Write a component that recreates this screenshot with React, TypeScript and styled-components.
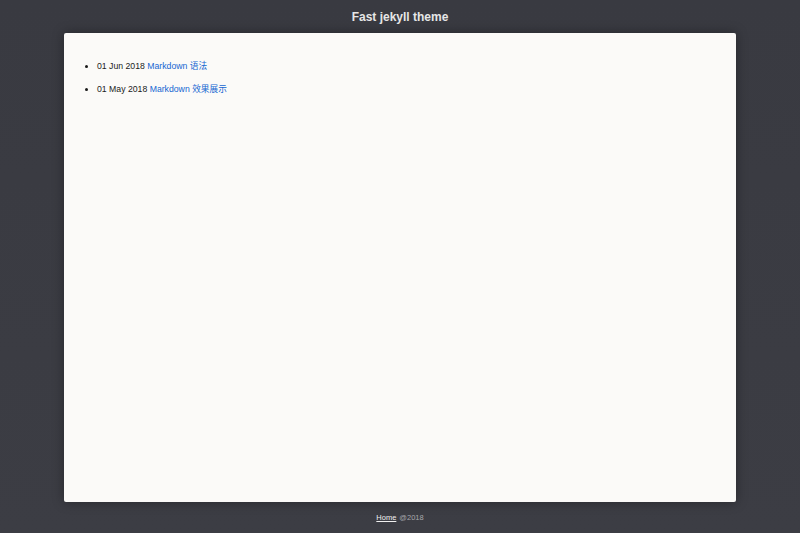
import React from "react";
import styled, { createGlobalStyle } from "styled-components";

const Global = createGlobalStyle`
  html, body { margin: 0; padding: 0; }
  body {
    background: #3b3c43;
    font-family: "Liberation Sans", Arial, "Noto Sans CJK SC", sans-serif;
    -webkit-font-smoothing: antialiased;
  }
`;

const Page = styled.div`
  display: flex;
  flex-direction: column;
  min-height: 533px;
  background: linear-gradient(180deg, #393a41 0%, #3c3d44 100%);
`;

const Header = styled.header`
  height: 33px;
  display: flex;
  align-items: center;
  justify-content: center;
`;

const Title = styled.h1`
  margin: 0;
  font-size: 12px;
  font-weight: bold;
  color: #e6e6e6;
  line-height: 1;
`;

const Card = styled.main`
  width: 672px;
  height: 469px;
  margin: 0 auto;
  box-sizing: border-box;
  background: #fbfaf8;
  border-radius: 2px;
  box-shadow: 0 0 12px rgba(0, 0, 0, 0.35);
  padding: 28px 0 0 33px;
`;

const PostList = styled.ul`
  margin: 0;
  padding: 0;
  list-style: disc;
`;

const PostItem = styled.li`
  font-size: 8.7px;
  line-height: 10px;
  color: #1a1a1a;
  margin-bottom: 13px;
`;

const PostLink = styled.a`
  color: #1566d2;
  text-decoration: none;
`;

const Footer = styled.footer`
  height: 31px;
  display: flex;
  align-items: center;
  justify-content: center;
  font-size: 7.5px;
  color: #a8a8ad;
  gap: 3px;
`;

const FooterLink = styled.a`
  color: #f0f0f0;
  text-decoration: underline;
`;

const posts = [
  { date: "01 Jun 2018", title: "Markdown 语法" },
  { date: "01 May 2018", title: "Markdown 效果展示" },
];

export default function App() {
  return (
    <>
      <Global />
      <Page>
        <Header>
          <Title>Fast jekyll theme</Title>
        </Header>
        <Card>
          <PostList>
            {posts.map((p) => (
              <PostItem key={p.title}>
                {p.date} <PostLink href="#">{p.title}</PostLink>
              </PostItem>
            ))}
          </PostList>
        </Card>
        <Footer>
          <FooterLink href="#">Home</FooterLink>
          <span>@2018</span>
        </Footer>
      </Page>
    </>
  );
}
